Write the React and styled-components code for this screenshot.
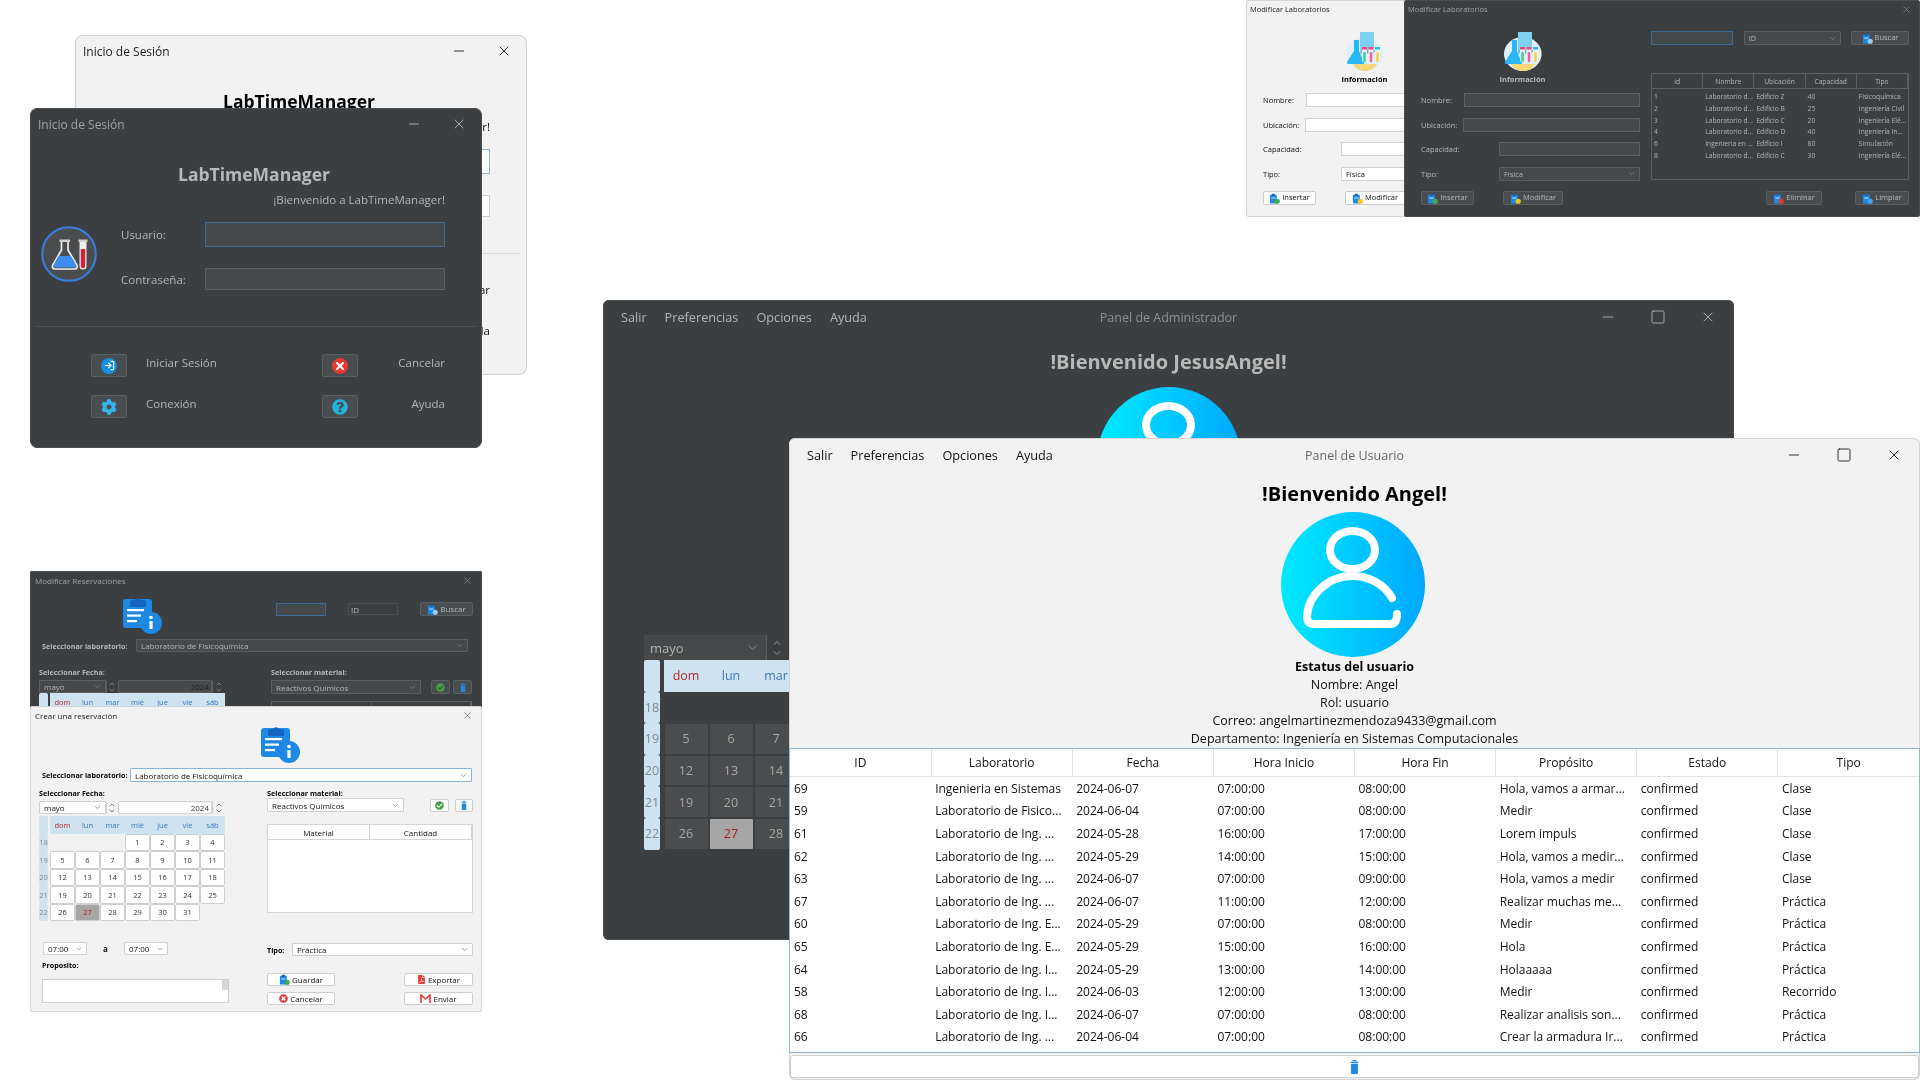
import React from 'react';
import styled, { createGlobalStyle, ThemeProvider } from 'styled-components';
import { ChevronDown, ChevronUp, LogIn, Minus, Square, X } from 'lucide-react';
import { FaCheckCircle, FaCog, FaFilePdf, FaQuestionCircle, FaTimesCircle } from 'react-icons/fa';

const dark = {
  bg: '#3c3f41', edge: '#4a4c4e', text: '#b4b4b4', strong: '#b8b8b8', muted: '#8f8f8f',
  field: '#45494a', line: '#5c5f60', focus: '#3e6a96', button: '#4a4d4f', buttonLine: '#5c5f60',
  cell: '#4a4c4e', cellLine: '#3c3f41', cellText: '#a8a8a8', rule: '#4e5052', year: '#222',
  tableBg: '#3c3f41', tableLine: '#5c5f60', winTitle: '#a0a0a0', icon: '#b0b0b0',
};
const light = {
  bg: '#f2f2f2', edge: '#d4d4d4', text: '#111', strong: '#000', muted: '#666',
  field: '#fff', line: '#d0d0d0', focus: '#8ab4dc', button: '#fff', buttonLine: '#cdcdcd',
  cell: '#fff', cellLine: '#cfcfcf', cellText: '#333', rule: '#dcdcdc', year: '#333',
  tableBg: '#fff', tableLine: '#d4d4d4', winTitle: '#222', icon: '#222',
};

const Global = createGlobalStyle`
  html, body { margin: 0; padding: 0; background: #fff; }
  body { font-family: "Open Sans", "Noto Sans", sans-serif; }
  * { box-sizing: border-box; }
`;

const Desktop = styled.main`
  position: relative;
  width: 1920px;
  height: 1080px;
  overflow: hidden;
  background: #fff;
`;

const Win = styled.section`
  position: absolute;
  left: ${p => p.$x}px;
  top: ${p => p.$y}px;
  width: ${p => p.$w}px;
  height: ${p => p.$h}px;
  display: flex;
  flex-direction: column;
  overflow: hidden;
  background: ${p => p.theme.bg};
  box-shadow: inset 0 0 0 1px ${p => p.theme.edge};
  border-radius: ${p => p.$r || 6}px;
  color: ${p => p.theme.text};
  font-size: ${p => p.$font || 12}px;
  filter: blur(${p => p.$blur || 0.3}px);
`;

const TitleBar = styled.header`
  flex: none;
  height: ${p => p.$h}px;
  padding: 0 ${p => p.$right}px 0 ${p => p.$left}px;
  display: flex;
  align-items: center;
  justify-content: space-between;
  color: ${p => p.theme.winTitle};
`;

const TitleControls = styled.div`
  display: flex;
  align-items: center;
  gap: ${p => p.$gap || 29}px;
  color: ${p => p.theme.icon};
`;

/* login */

const LoginHeading = styled.h1`
  margin: 22px 0 0;
  height: 24px;
  line-height: 24px;
  text-align: center;
  padding-right: 4px;
  font-size: 17.500px;
  font-weight: 700;
  color: ${p => p.theme.strong};
`;

const Welcome = styled.p`
  margin: 6px 0 0;
  padding-right: 37px;
  line-height: 16px;
  text-align: right;
  font-size: 11.500px;
`;

const LoginForm = styled.div`
  margin: 14px 0 0 11px;
  display: grid;
  grid-template-columns: 80px 84px 240px;
  grid-template-rows: 25px 22px;
  row-gap: 21px;
  align-items: center;
  font-size: 11.500px;
`;

const LogoCell = styled.div`
  grid-row: 1 / 3;
  align-self: center;
  margin-top: -4px;
  line-height: 0;
`;

const Rule = styled.hr`
  margin: 36px 6px 0;
  border: 0;
  height: 1px;
  background: ${p => p.theme.rule};
`;

const LoginActions = styled.div`
  margin: 27px 0 0 61px;
  display: grid;
  grid-template-columns: 36px 195px 36px 87px;
  grid-auto-rows: 23px;
  row-gap: 18px;
  font-size: 11.500px;
  line-height: 18px;
`;

const ActionLabel = styled.span`
  margin-left: ${p => (p.$end ? 0 : 19)}px;
  text-align: ${p => (p.$end ? 'right' : 'left')};
`;

const IconButton = styled.button`
  width: ${p => p.$w || 36}px;
  height: ${p => p.$h || 23}px;
  padding: 0;
  display: inline-flex;
  align-items: center;
  justify-content: center;
  gap: 2px;
  flex: none;
  background: ${p => p.theme.button};
  border: 1px solid ${p => p.theme.buttonLine};
  border-radius: 2px;
  color: ${p => p.theme.text};
  font: inherit;
  line-height: 1;
`;

const Badge = styled.span`
  width: 16px;
  height: 16px;
  border-radius: 50%;
  display: inline-flex;
  align-items: center;
  justify-content: center;
  background: ${p => p.$color};
  color: #fff;
`;

/* shared small form parts */

const Field = styled.input`
  display: block;
  width: ${p => p.$w}px;
  height: ${p => p.$h}px;
  padding: 0 2px;
  flex: none;
  background: ${p => (p.$plain ? 'transparent' : p.theme.field)};
  border: 1px solid ${p => (p.$focus ? p.theme.focus : p.$plain ? '#4e5052' : p.theme.line)};
  color: ${p => p.theme.text};
  font: inherit;
  outline: 0;
`;

const SelectBox = styled.div`
  width: ${p => p.$w}px;
  height: ${p => p.$h}px;
  flex: none;
  padding: 0 3px 0 4px;
  display: flex;
  align-items: center;
  justify-content: space-between;
  background: ${p => p.theme.field};
  border: 1px solid ${p => (p.$focus ? p.theme.focus : p.theme.line)};
  border-radius: 1px;
  color: ${p => p.theme.text};
  svg { flex: none; opacity: 0.7; }
`;

function Select({ w, h, focus, text, icon = 9 }) {
  return (
    <SelectBox $w={w} $h={h} $focus={focus}>
      <span>{text}</span>
      <ChevronDown size={icon} strokeWidth={1.5} />
    </SelectBox>
  );
}

const SpinBox = styled.div`
  width: ${p => p.$w}px;
  height: ${p => p.$h}px;
  flex: none;
  display: flex;
  flex-direction: column;
  align-items: center;
  justify-content: center;
  color: ${p => p.theme.text};
  border-left: 1px solid ${p => p.theme.line};
  svg { margin: -1px 0; opacity: 0.95; }
`;

function Spin({ w, h, icon = 8 }) {
  return (
    <SpinBox $w={w} $h={h}>
      <ChevronUp size={icon} strokeWidth={1.6} />
      <ChevronDown size={icon} strokeWidth={1.6} />
    </SpinBox>
  );
}

const YearBox = styled.div`
  width: 94px;
  height: 13px;
  flex: none;
  padding-right: 2px;
  text-align: right;
  line-height: 12px;
  background: ${p => p.theme.field};
  border: 1px solid ${p => p.theme.line};
  border-radius: 2px;
  color: ${p => p.theme.year};
`;

const Row = styled.div`
  display: flex;
  align-items: ${p => p.$align || 'center'};
  margin-top: ${p => p.$top || 0}px;
  margin-left: ${p => p.$left || 0}px;
  gap: ${p => p.$gap || 0}px;
  justify-content: ${p => p.$justify || 'flex-start'};
`;

const BoldLabel = styled.label`
  display: block;
  flex: none;
  width: ${p => (p.$w ? `${p.$w}px` : 'auto')};
  font-size: ${p => p.$size || 7.2}px;
  font-weight: 700;
  color: ${p => p.theme.strong};
  line-height: 10px;
  margin: ${p => p.$margin || 0};
  white-space: nowrap;
`;

/* calendar */

const CalGrid = styled.div`
  display: grid;
  grid-template-columns: ${p => p.$wk + p.$gap}px repeat(7, ${p => p.$cw}px);
  grid-template-rows: repeat(6, ${p => p.$rh}px);
  font-size: ${p => p.$font}px;
`;

const WeekCell = styled.div`
  margin-right: ${p => p.$gap}px;
  background: #cfe2ef;
  color: #7a8a96;
  border-radius: 2px;
  display: flex;
  align-items: center;
  justify-content: center;
`;

const HeadCell = styled.div`
  background: #cfe2ef;
  color: ${p => (p.$sun ? '#b52a2a' : '#3d78b8')};
  display: flex;
  align-items: center;
  justify-content: center;
`;

const DayCell = styled.div`
  background: ${p => (p.$sel ? '#a6a6a6' : p.theme.cell)};
  border: 1px solid ${p => p.theme.cellLine};
  border-radius: 2px;
  color: ${p => (p.$sel ? '#b01818' : p.theme.cellText)};
  display: flex;
  align-items: center;
  justify-content: center;
`;

const weekdays = ['dom', 'lun', 'mar', 'mié', 'jue', 'vie', 'sáb'];
const weeks = [
  [18, [null, null, null, 1, 2, 3, 4]],
  [19, [5, 6, 7, 8, 9, 10, 11]],
  [20, [12, 13, 14, 15, 16, 17, 18]],
  [21, [19, 20, 21, 22, 23, 24, 25]],
  [22, [26, 27, 28, 29, 30, 31, null]],
];

function Calendar({ wk, gap, cw, rh, font }) {
  return (
    <CalGrid $wk={wk} $gap={gap} $cw={cw} $rh={rh} $font={font}>
      <WeekCell $gap={gap} />
      {weekdays.map((d, i) => <HeadCell key={d} $sun={i === 0}>{d}</HeadCell>)}
      {weeks.map(([num, days]) => (
        <React.Fragment key={num}>
          <WeekCell $gap={gap}>{num}</WeekCell>
          {days.map((d, i) => (d
            ? <DayCell key={i} $sel={d === 27}>{d}</DayCell>
            : <div key={i} />))}
        </React.Fragment>
      ))}
    </CalGrid>
  );
}

/* icons */

function FlaskLogo() {
  return (
    <svg width="56" height="56" viewBox="0 0 56 56">
      <circle cx="28" cy="28" r="26.800" fill="#4a4c4e" stroke="#3a7fe0" strokeWidth="2" />
      <path d="M20.500 15v9L11.800 39c-1 2 0 4 2 4h20c2 0 3-2 2-4L27 24v-9" fill="#4a4c4e" stroke="#eee" strokeWidth="1.700" />
      <path d="M17.500 30h12.500l5 9c.6 1.300 0 2.500-1.500 2.500H14c-1.500 0-2.100-1.200-1.500-2.500z" fill="#3f8cf0" />
      <rect x="18.500" y="13.500" width="10.500" height="2.500" fill="#d0d0d0" />
      <path d="M38.500 15v25a3.500 3.500 0 0 0 7 0V15z" fill="#eee" />
      <path d="M39.800 23h4.400v17a2.200 2.200 0 0 1-4.400 0z" fill="#d8203c" />
      <rect x="37.500" y="13.500" width="9" height="2.500" fill="#d0d0d0" />
    </svg>
  );
}

function ClipboardInfo() {
  return (
    <svg width="40" height="40" viewBox="0 0 40 40">
      <rect x="0" y="5" width="29" height="29" rx="3" fill="#1e88e5" />
      <path d="M7 13V8a2 2 0 0 1 2-2h2.500a4.500 4.500 0 0 1 7 0H21a2 2 0 0 1 2 2v5z" fill="#1565c0" />
      <rect x="4" y="15" width="17" height="2.200" fill="#fff" />
      <rect x="4" y="20.500" width="14" height="2.200" fill="#fff" />
      <rect x="4" y="26" width="10" height="2.200" fill="#fff" />
      <circle cx="28" cy="29" r="11" fill="#1e88e5" />
      <circle cx="28" cy="23.500" r="1.800" fill="#fff" />
      <rect x="26.400" y="27" width="3.200" height="8" rx="0.500" fill="#fff" />
    </svg>
  );
}

function LabArt() {
  return (
    <svg width="38" height="40" viewBox="0 -2 38 40">
      <ellipse cx="18.800" cy="21" rx="18.800" ry="17" fill="#dff1f8" />
      <path d="M7 31h24c-3 5-7 7-12 7S10 36 7 31z" fill="#f6d878" />
      <rect x="14" y="-1" width="14" height="22" fill="#7fd0ee" />
      <path d="M8 7h5v11l5 12c.3 1-.5 1-1 1H3c-2 0-2.500-1-2-2l7-11z" fill="#29b6f6" />
      <rect x="15" y="17" width="19" height="2" fill="#8fa0a8" />
      <rect x="16" y="14" width="5" height="15" rx="2" fill="#eef3f5" />
      <rect x="17.200" y="19" width="2.600" height="10" rx="1" fill="#39d0a0" />
      <rect x="16" y="14" width="5" height="2.500" fill="#f0457a" />
      <rect x="22.500" y="14" width="5" height="15" rx="2" fill="#eef3f5" />
      <rect x="23.700" y="19" width="2.600" height="10" rx="1" fill="#f0609a" />
      <rect x="22.500" y="14" width="5" height="2.500" fill="#f0457a" />
      <rect x="29" y="14" width="5" height="15" rx="2" fill="#eef3f5" />
      <rect x="30.200" y="19" width="2.600" height="10" rx="1" fill="#f6d14a" />
      <rect x="29" y="14" width="5" height="2.500" fill="#29b6f6" />
    </svg>
  );
}

function DocIcon({ size = 11, badge = '#3fae4a' }) {
  return (
    <svg width={size} height={size} viewBox="0 0 12 12">
      <rect x="1" y="2" width="7.500" height="9.500" rx="1" fill="#1e88e5" />
      <rect x="3" y="0.800" width="3.500" height="2.500" rx="0.800" fill="#1565c0" />
      <rect x="2.500" y="5" width="4.500" height="1" fill="#d8ecff" />
      <circle cx="9" cy="9" r="2.800" fill={badge} />
    </svg>
  );
}

function TrashIcon({ w = 7, h = 11 }) {
  return (
    <svg width={w} height={h} viewBox="0 0 7 11">
      <rect x="2" y="0" width="3" height="1" fill="#1e88e5" />
      <rect x="0.500" y="1.400" width="6" height="1" fill="#1e88e5" />
      <rect x="0.800" y="3" width="5.400" height="8" rx="0.500" fill="#1e88e5" />
    </svg>
  );
}

function GmailIcon() {
  return (
    <svg width="11" height="9" viewBox="0 0 11 9">
      <path d="M1 9V1l4.500 4L10 1v8" fill="none" stroke="#e53935" strokeWidth="1.600" />
    </svg>
  );
}

function AvatarIcon() {
  return (
    <svg width="144" height="145" viewBox="0 0 144 145">
      <defs>
        <linearGradient id="avatar-fill" x1="0" x2="1" y1="0" y2="0">
          <stop offset="0" stopColor="#00eaff" />
          <stop offset="1" stopColor="#00a8ff" />
        </linearGradient>
      </defs>
      <ellipse cx="72" cy="72.500" rx="72" ry="72.500" fill="url(#avatar-fill)" />
      <g fill="none" stroke="#fff" strokeWidth="8" strokeLinecap="round" strokeLinejoin="round">
        <ellipse cx="71.500" cy="38" rx="22.500" ry="19" />
        <path d="M111 86C103 72 88 64 71 64 46 64 27 84 26 104q0 8 7 8h76q7 0 7-10" />
      </g>
    </svg>
  );
}

function WinControls({ size, gap, max }) {
  return (
    <TitleControls $gap={gap}>
      <Minus size={size} strokeWidth={1.4} />
      {max && <Square size={size} strokeWidth={1.4} />}
      <X size={size} strokeWidth={1.4} />
    </TitleControls>
  );
}

/* login window */

function LoginWindow({ x, y }) {
  return (
    <Win $x={x} $y={y} $w={452} $h={340} $r={8} $blur={0.35} $font={12}>
      <TitleBar $h={32} $left={8} $right={15}>
        <span>Inicio de Sesión</span>
        <WinControls size={16} gap={29} />
      </TitleBar>
      <LoginHeading>LabTimeManager</LoginHeading>
      <Welcome>¡Bienvenido a LabTimeManager!</Welcome>
      <LoginForm>
        <LogoCell><FlaskLogo /></LogoCell>
        <span>Usuario:</span>
        <Field $w={240} $h={25} $focus readOnly />
        <span>Contraseña:</span>
        <Field $w={240} $h={22} readOnly />
      </LoginForm>
      <Rule />
      <LoginActions>
        <IconButton><Badge $color="#1590e0"><LogIn size={11} strokeWidth={2.6} /></Badge></IconButton>
        <ActionLabel>Iniciar Sesión</ActionLabel>
        <IconButton><Badge $color="#e53935"><X size={12} strokeWidth={4} /></Badge></IconButton>
        <ActionLabel $end>Cancelar</ActionLabel>
        <IconButton><FaCog size={16} color="#35b6e8" /></IconButton>
        <ActionLabel>Conexión</ActionLabel>
        <IconButton><FaQuestionCircle size={16} color="#22b3d6" /></IconButton>
        <ActionLabel $end>Ayuda</ActionLabel>
      </LoginActions>
    </Win>
  );
}

/* modificar laboratorios */

const LabBody = styled.div`
  padding: 0 11px 0 17px;
  display: grid;
  grid-template-columns: 219px 258px;
  column-gap: 11px;
`;

const LabInfo = styled.div`
  width: 203px;
  margin-top: 13px;
  display: flex;
  flex-direction: column;
  align-items: center;
  line-height: 0;
`;

const LabFields = styled.div`
  margin-top: 9px;
  display: flex;
  flex-direction: column;
  gap: 10.500px;
`;

const LabFieldRow = styled.div`
  height: 14px;
  display: flex;
  align-items: center;
  justify-content: space-between;
`;

const MiniTable = styled.div`
  display: grid;
  grid-template-columns: repeat(${p => p.$cols}, minmax(0, 1fr));
  grid-template-rows: ${p => p.$head}px repeat(${p => p.$rows}, ${p => p.$rh}px);
  height: ${p => p.$h}px;
  margin-top: ${p => p.$top || 0}px;
  background: ${p => p.theme.tableBg};
  border: 1px solid ${p => p.theme.tableLine};
  font-size: ${p => p.$font || 7}px;
`;

const MiniHead = styled.div`
  height: 15px;
  display: flex;
  align-items: center;
  justify-content: center;
  border-bottom: 1px solid ${p => p.theme.tableLine};
  border-right: 1px solid ${p => p.theme.tableLine};
`;

const MiniCell = styled.div`
  padding-left: 2px;
  line-height: 11.800px;
  white-space: nowrap;
  overflow: hidden;
`;

const labRows = [
  ['1', 'Laboratorio d...', 'Edificio Z', '40', 'Fisicoquímica'],
  ['2', 'Laboratorio d...', 'Edificio B', '25', 'Ingeniería Civil'],
  ['3', 'Laboratorio d...', 'Edificio C', '20', 'Ingeniería Elé...'],
  ['4', 'Laboratorio d...', 'Edificio D', '40', 'Ingeniería In...'],
  ['6', 'Ingenieria en ...', 'Edificio I', '80', 'Simulación'],
  ['8', 'Laboratorio d...', 'Edificio C', '30', 'Ingeniería Elé...'],
];

// the light copy sits behind the dark one, so only its left pane ever shows
function LabWindow({ x, withTable }) {
  return (
    <Win $x={x} $y={0} $w={516} $h={217} $r={3} $blur={0.45} $font={7.5}>
      <TitleBar $h={18} $left={4} $right={8}>
        <span>Modificar Laboratorios</span>
        <X size={11} strokeWidth={1.2} />
      </TitleBar>
      <LabBody>
        <div>
          <LabInfo>
            <LabArt />
            <BoldLabel $margin="3px 0 0" $size={7.5}>Información</BoldLabel>
          </LabInfo>
          <LabFields>
            <LabFieldRow><span>Nombre:</span><Field $w={176} $h={14} readOnly /></LabFieldRow>
            <LabFieldRow><span>Ubicación:</span><Field $w={177} $h={14} readOnly /></LabFieldRow>
            <LabFieldRow><span>Capacidad:</span><Field $w={141} $h={14} readOnly /></LabFieldRow>
            <LabFieldRow><span>Tipo:</span><Select w={141} h={14} text="Física" /></LabFieldRow>
            <Row $gap={29}>
              <IconButton $w={53} $h={14}><DocIcon /> Insertar</IconButton>
              <IconButton $w={60} $h={14}><DocIcon badge="#f5c518" /> Modificar</IconButton>
            </Row>
          </LabFields>
        </div>
        {withTable && (
          <div>
            <Row $top={13} $gap={10.500}>
              <Field $w={82} $h={14} $focus readOnly />
              <Select w={97} h={14} text="ID" />
              <IconButton $w={58} $h={14}><DocIcon badge="#9ecbee" /> Buscar</IconButton>
            </Row>
            <MiniTable $cols={5} $head={17} $rows={6} $rh={11.800} $h={107} $top={28} $font={6.7}>
              {['id', 'Nombre', 'Ubicación', 'Capacidad', 'Tipo'].map(h => <MiniHead key={h}>{h}</MiniHead>)}
              {labRows.flat().map((t, i) => <MiniCell key={i}>{t}</MiniCell>)}
            </MiniTable>
            <Row $top={11} $gap={33} $justify="flex-end">
              <IconButton $w={56} $h={14}><DocIcon badge="#e53935" /> Eliminar</IconButton>
              <IconButton $w={54} $h={14}><DocIcon badge="#42a5f5" /> Limpiar</IconButton>
            </Row>
          </div>
        )}
      </LabBody>
    </Win>
  );
}

/* reservaciones */

const ResColumns = styled.div`
  display: grid;
  grid-template-columns: ${p => p.$left}px ${p => p.$right}px;
  column-gap: ${p => p.$gap}px;
  margin-left: 9px;
  margin-top: ${p => p.$top}px;
`;

function DateControls() {
  return (
    <Row>
      <Select w={67} h={13} text="mayo" />
      <Spin w={11} h={13} />
      <Row $left={1}>
        <YearBox>2024</YearBox>
        <Spin w={13} h={13} />
      </Row>
    </Row>
  );
}

const smallCalendar = { wk: 9, gap: 2, cw: 25, rh: 17.500, font: 7.5 };

function ReservationDarkWindow() {
  return (
    <Win $x={30} $y={571} $w={452} $h={300} $r={2} $blur={0.45} $font={8}>
      <TitleBar $h={19} $left={5} $right={9}>
        <span>Modificar Reservaciones</span>
        <X size={11} strokeWidth={1.2} />
      </TitleBar>
      <Row $align="flex-start" $left={93} $top={4}>
        <ClipboardInfo />
        <Row $left={113} $top={8} $gap={22}>
          <Field $w={50} $h={13} $focus readOnly />
          <Field $w={50} $h={12} $plain value="ID" readOnly />
          <IconButton $w={53} $h={14}><DocIcon badge="#9ecbee" /> Buscar</IconButton>
        </Row>
      </Row>
      <Row $top={5} $left={12}>
        <BoldLabel $w={94}>Seleccionar laboratorio:</BoldLabel>
        <Select w={332} h={13} text="Laboratorio de Fisicoquímica" />
      </Row>
      <ResColumns $left={188} $right={201} $gap={44} $top={15}>
        <div>
          <BoldLabel $margin="0 0 3px">Seleccionar Fecha:</BoldLabel>
          <DateControls />
          <Calendar {...smallCalendar} />
        </div>
        <div>
          <BoldLabel $margin="0 0 3px">Seleccionar material:</BoldLabel>
          <Row>
            <Select w={150} h={14} text="Reactivos Químicos" />
            <Row $left={10} $gap={3}>
              <IconButton $w={19} $h={14}><FaCheckCircle size={9} color="#43a047" /></IconButton>
              <IconButton $w={19} $h={14}><TrashIcon w={6} h={9} /></IconButton>
            </Row>
          </Row>
          <MiniTable $cols={2} $head={15} $rows={1} $rh={70} $h={89} $top={7}>
            <MiniHead>Material</MiniHead>
            <MiniHead>Cantidad</MiniHead>
          </MiniTable>
        </div>
      </ResColumns>
    </Win>
  );
}

const TextBox = styled.div`
  width: 187px;
  height: 24px;
  background: #fff;
  border: 1px solid #cfcfcf;
  display: flex;
  justify-content: flex-end;
  margin: 9px 0 0 3px;
`;

const Scrollbar = styled.div`
  width: 6px;
  height: 10px;
  background: #d8d8d8;
`;

const SmallWord = styled.span`
  width: ${p => p.$w}px;
  text-align: center;
  font-weight: 700;
`;

const ResActions = styled.div`
  margin-top: 17px;
  display: grid;
  grid-template-columns: 68px 69px;
  grid-auto-rows: 13px;
  justify-content: space-between;
  row-gap: 6px;
`;

function ReservationWindow() {
  return (
    <Win $x={30} $y={706} $w={452} $h={306} $r={3} $blur={0.45} $font={8}>
      <TitleBar $h={18} $left={5} $right={9}>
        <span>Crear una reservación</span>
        <X size={11} strokeWidth={1.2} />
      </TitleBar>
      <Row $justify="center" $left={50} $top={-1}><ClipboardInfo /></Row>
      <Row $top={5} $left={12}>
        <BoldLabel $w={88}>Seleccionar laboratorio:</BoldLabel>
        <Select w={342} h={14} focus text="Laboratorio de Fisicoquímica" />
      </Row>
      <ResColumns $left={190} $right={206} $gap={38} $top={6}>
        <div>
          <BoldLabel $margin="0 0 3px">Seleccionar Fecha:</BoldLabel>
          <DateControls />
          <Row $top={2}><Calendar {...smallCalendar} /></Row>
          <Row $top={21} $left={4}>
            <Select w={44} h={13} text="07:00" icon={8} />
            <SmallWord $w={37}>a</SmallWord>
            <Select w={44} h={13} text="07:00" icon={8} />
          </Row>
          <BoldLabel $margin="5px 0 0 3px">Proposito:</BoldLabel>
          <TextBox><Scrollbar /></TextBox>
        </div>
        <div>
          <BoldLabel>Seleccionar material:</BoldLabel>
          <Row $justify="space-between">
            <Select w={137} h={14} text="Reactivos Químicos" />
            <Row $left={25} $gap={6}>
              <IconButton $w={19} $h={13}><FaCheckCircle size={9} color="#43a047" /></IconButton>
              <IconButton $w={18} $h={13}><TrashIcon w={6} h={9} /></IconButton>
            </Row>
          </Row>
          <MiniTable $cols={2} $head={15} $rows={1} $rh={70} $h={89} $top={12} $font={8}>
            <MiniHead>Material</MiniHead>
            <MiniHead>Cantidad</MiniHead>
          </MiniTable>
          <Row $top={30} $justify="space-between">
            <BoldLabel>Tipo:</BoldLabel>
            <Select w={181} h={13} text="Práctica" />
          </Row>
          <ResActions>
            <IconButton $w={68} $h={13}><DocIcon /> Guardar</IconButton>
            <IconButton $w={69} $h={13}><FaFilePdf size={9} color="#e53935" /> Exportar</IconButton>
            <IconButton $w={68} $h={13}><FaTimesCircle size={9} color="#e53935" /> Cancelar</IconButton>
            <IconButton $w={69} $h={13}><GmailIcon /> Enviar</IconButton>
          </ResActions>
        </div>
      </ResColumns>
    </Win>
  );
}

/* paneles */

const PanelBar = styled.header`
  flex: none;
  height: 34px;
  display: grid;
  grid-template-columns: 1fr auto 1fr;
  align-items: center;
  padding: 0 ${p => p.$right}px 0 18px;
  color: ${p => p.theme.text};
`;

const Menu = styled.nav`
  display: flex;
  gap: 18px;
  font-size: 12.700px;
`;

const PanelTitle = styled.span`
  color: ${p => p.theme.muted};
`;

const ControlsEnd = styled.div`
  justify-self: end;
`;

const Greeting = styled.h2`
  margin: ${p => p.$top}px 0 0;
  line-height: 32px;
  text-align: center;
  font-size: 20px;
  font-weight: 700;
  color: ${p => p.theme.strong};
`;

const AvatarSlot = styled.div`
  margin-top: ${p => p.$top}px;
  padding-right: ${p => p.$nudge || 0}px;
  display: flex;
  justify-content: center;
  line-height: 0;
`;

const AdminDate = styled.div`
  margin: 103px 0 0 41px;
`;

const AdminSelect = styled.div`
  width: 122px;
  height: 25px;
  padding: 0 6px;
  display: flex;
  align-items: center;
  justify-content: space-between;
  background: ${p => p.theme.field};
  font-size: 13px;
  svg { opacity: 0.7; }
`;

const StatusBlock = styled.div`
  text-align: center;
  line-height: 18px;
  color: #111;
  margin-top: 1px;
`;

const StatusTitle = styled.div`
  font-weight: 700;
  color: #000;
`;

const TableFrame = styled.div`
  flex: none;
  height: 305px;
  border: 1px solid #8fb5d9;
  background: #fff;
`;

const Grid = styled.table`
  width: 100%;
  table-layout: fixed;
  border-collapse: collapse;
  font-size: 12px;
  color: #111;
`;

const Th = styled.th`
  height: 27px;
  padding: 0;
  font-weight: 400;
  text-align: center;
  border-right: 1px solid #e2e2e2;
  border-bottom: 1px solid #e2e2e2;
  &:last-child { border-right: 0; }
`;

const Td = styled.td`
  height: 22.600px;
  padding: 0 0 0 4px;
  white-space: nowrap;
  overflow: hidden;
`;

const BodySpacer = styled.tr`
  height: 1px;
`;

const DeleteBar = styled.div`
  flex: none;
  height: 23px;
  margin: 2px 1px 0;
  display: flex;
  align-items: center;
  justify-content: center;
  background: #fff;
  border: 1px solid #d0d0d0;
  border-radius: 3px;
`;

const columns = ['ID', 'Laboratorio', 'Fecha', 'Hora Inicio', 'Hora Fin', 'Propósito', 'Estado', 'Tipo'];
const rows = [
  ['69', 'Ingenieria en Sistemas', '2024-06-07', '07:00:00', '08:00:00', 'Hola, vamos a armar...', 'Clase'],
  ['59', 'Laboratorio de Fisico...', '2024-06-04', '07:00:00', '08:00:00', 'Medir', 'Clase'],
  ['61', 'Laboratorio de Ing. ...', '2024-05-28', '16:00:00', '17:00:00', 'Lorem impuls', 'Clase'],
  ['62', 'Laboratorio de Ing. ...', '2024-05-29', '14:00:00', '15:00:00', 'Hola, vamos a medir...', 'Clase'],
  ['63', 'Laboratorio de Ing. ...', '2024-06-07', '07:00:00', '09:00:00', 'Hola, vamos a medir', 'Clase'],
  ['67', 'Laboratorio de Ing. ...', '2024-06-07', '11:00:00', '12:00:00', 'Realizar muchas me...', 'Práctica'],
  ['60', 'Laboratorio de Ing. E...', '2024-05-29', '07:00:00', '08:00:00', 'Medir', 'Práctica'],
  ['65', 'Laboratorio de Ing. E...', '2024-05-29', '15:00:00', '16:00:00', 'Hola', 'Práctica'],
  ['64', 'Laboratorio de Ing. I...', '2024-05-29', '13:00:00', '14:00:00', 'Holaaaaa', 'Práctica'],
  ['58', 'Laboratorio de Ing. I...', '2024-06-03', '12:00:00', '13:00:00', 'Medir', 'Recorrido'],
  ['68', 'Laboratorio de Ing. I...', '2024-06-07', '07:00:00', '08:00:00', 'Realizar analisis son...', 'Práctica'],
  ['66', 'Laboratorio de Ing. ...', '2024-06-04', '07:00:00', '08:00:00', 'Crear la armadura Ir...', 'Práctica'],
];

function PanelHeader({ title }) {
  return (
    <PanelBar $right={18}>
      <Menu>
        <span>Salir</span>
        <span>Preferencias</span>
        <span>Opciones</span>
        <span>Ayuda</span>
      </Menu>
      <PanelTitle>{title}</PanelTitle>
      <ControlsEnd><WinControls size={16} gap={34} max /></ControlsEnd>
    </PanelBar>
  );
}

function AdminWindow() {
  return (
    <Win $x={603} $y={300} $w={1131} $h={640} $font={12.500}>
      <PanelHeader title="Panel de Administrador" />
      <Greeting $top={12}>!Bienvenido JesusAngel!</Greeting>
      <AvatarSlot $top={9}><AvatarIcon /></AvatarSlot>
      <AdminDate>
        <Row>
          <AdminSelect>mayo<ChevronDown size={15} strokeWidth={1.4} /></AdminSelect>
          <Spin w={21} h={25} icon={12} />
        </Row>
        <Calendar wk={16} gap={3.500} cw={45} rh={31.600} font={12.500} />
      </AdminDate>
    </Win>
  );
}

function UserWindow() {
  return (
    <Win $x={789} $y={438} $w={1131} $h={642} $font={12.500}>
      <PanelHeader title="Panel de Usuario" />
      <Greeting $top={6}>!Bienvenido Angel!</Greeting>
      <AvatarSlot $top={2} $nudge={3}><AvatarIcon /></AvatarSlot>
      <StatusBlock>
        <StatusTitle>Estatus del usuario</StatusTitle>
        <div>Nombre: Angel</div>
        <div>Rol: usuario</div>
        <div>Correo: angelmartinezmendoza9433@gmail.com</div>
        <div>Departamento: Ingeniería en Sistemas Computacionales</div>
      </StatusBlock>
      <TableFrame>
        <Grid>
          <thead>
            <tr>{columns.map(c => <Th key={c}>{c}</Th>)}</tr>
          </thead>
          <tbody>
            <BodySpacer />
            {rows.map(r => (
              <tr key={r[0]}>
                <Td>{r[0]}</Td>
                <Td>{r[1]}</Td>
                <Td>{r[2]}</Td>
                <Td>{r[3]}</Td>
                <Td>{r[4]}</Td>
                <Td>{r[5]}</Td>
                <Td>confirmed</Td>
                <Td>{r[6]}</Td>
              </tr>
            ))}
          </tbody>
        </Grid>
      </TableFrame>
      <DeleteBar><TrashIcon w={9} h={14} /></DeleteBar>
    </Win>
  );
}

export default function App() {
  return (
    <Desktop>
      <Global />
      <ThemeProvider theme={light}>
        <LoginWindow x={75} y={35} />
        <LabWindow x={1246} />
      </ThemeProvider>
      <ThemeProvider theme={dark}>
        <LoginWindow x={30} y={108} />
        <LabWindow x={1404} withTable />
        <ReservationDarkWindow />
        <AdminWindow />
      </ThemeProvider>
      <ThemeProvider theme={light}>
        <ReservationWindow />
        <UserWindow />
      </ThemeProvider>
    </Desktop>
  );
}
